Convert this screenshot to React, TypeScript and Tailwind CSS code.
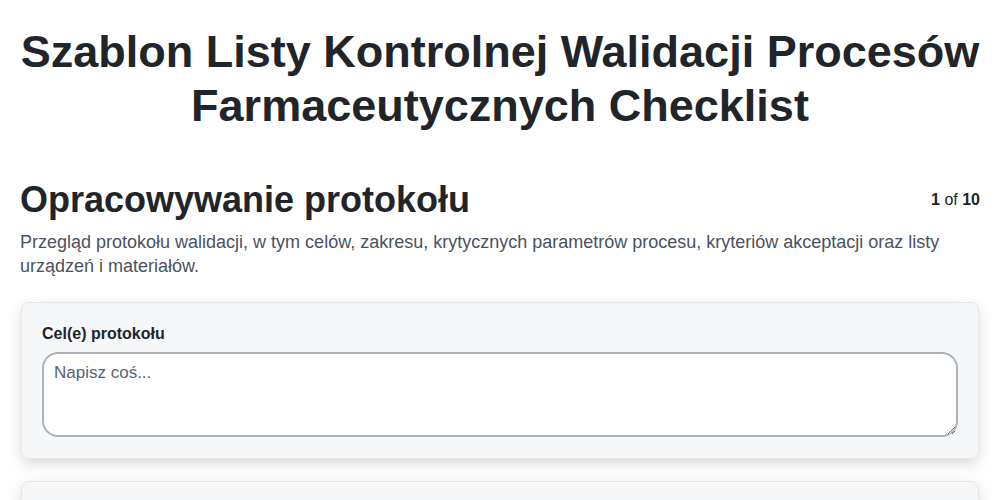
export default function App() {
  return (
    <div
      className="min-h-screen bg-white px-5 pt-[25px] text-[#212529]"
      style={{ fontFamily: '"Liberation Sans", Arial, sans-serif' }}
    >
      <h1 className="text-center text-[45px] font-bold leading-[54px]">
        Szablon Listy Kontrolnej Walidacji Procesów Farmaceutycznych Checklist
      </h1>

      <div className="mt-[45px] flex items-center justify-between">
        <h2 className="text-[36px] font-bold leading-[43px]">Opracowywanie protokołu</h2>
        <div className="text-[16px] leading-6">
          <span className="font-bold">1</span> of <span className="font-bold">10</span>
        </div>
      </div>
      <p className="mt-[9px] text-[18px] leading-6 text-[#4a5261]">
        Przegląd protokołu walidacji, w tym celów, zakresu, krytycznych parametrów procesu, kryteriów akceptacji oraz listy urządzeń i materiałów.
      </p>

      <div className="mx-px mt-[24px] flex flex-col gap-[22px]">
        <div className="rounded-lg border border-[#e4e6ea] bg-[#f6f7f9] pb-[21px] pl-5 pr-[20px] pt-[19px] shadow-[0_5px_14px_rgba(0,0,0,0.15)]">
          <label className="block text-[16px] font-bold leading-6">Cel(e) protokołu</label>
          <textarea
            className="mt-[6px] block h-[85px] w-full rounded-[16px] border-2 border-[#abb2ba] bg-white px-[10px] py-[7px] text-[17px] leading-6 text-[#212529] placeholder:text-[#5a6270] focus:outline-none"
            placeholder="Napisz coś..."
          />
        </div>
        <div className="h-[120px] rounded-lg border border-[#e4e6ea] bg-[#f6f7f9] shadow-[0_5px_14px_rgba(0,0,0,0.15)]" />
      </div>
    </div>
  );
}
